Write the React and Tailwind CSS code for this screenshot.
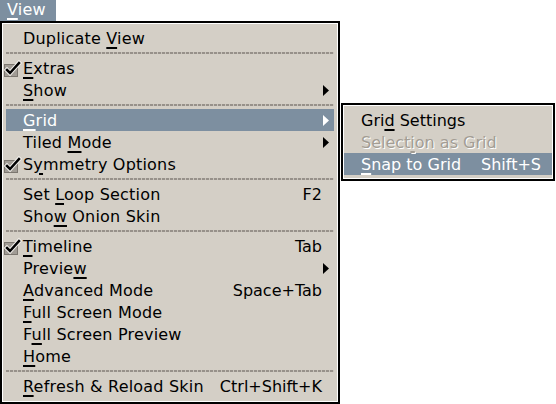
import React from 'react';

const Mnemonic = ({ text, u }) => {
  if (u === undefined || u < 0) return <span>{text}</span>;
  return (
    <span>
      {text.slice(0, u)}
      <span className="underline decoration-2 underline-offset-[3px]">{text[u]}</span>
      {text.slice(u + 1)}
    </span>
  );
};

const Check = () => (
  <svg width="18" height="18" viewBox="0 0 18 18" className="-ml-[2px] block">
    <rect x="0" y="4" width="14" height="13" fill="#7c7770" />
    <rect x="1" y="5" width="12" height="11" fill="#a19c95" />
    <path d="M3 10 L6 13 L15 3" fill="none" stroke="#f4f2ee" strokeWidth="4.5" strokeLinecap="square" />
    <path d="M3 10 L6 13 L15 3" fill="none" stroke="#000000" strokeWidth="2.5" strokeLinecap="square" />
  </svg>
);

const Arrow = ({ active }) => (
  <svg width="7" height="11" viewBox="0 0 7 11" className="block">
    <path d="M0 0 L6 5.5 L0 11 Z" fill={active ? '#ffffff' : '#000000'} />
  </svg>
);

const Separator = () => (
  <div className="h-[8px] flex flex-col justify-center">
    <div className="h-[2px] bg-[repeating-linear-gradient(90deg,#97918a_0_3px,#c9c4bb_3px_4px)]" />
  </div>
);

const MenuItem = ({ label, u, checked, shortcut, arrow, active, disabled, sub }) => (
  <div
    className={
      active
        ? 'flex items-center h-[22px] pt-[1px] bg-[#7d8fa0] text-white'
        : disabled
        ? 'flex items-center h-[22px] pt-[1px] text-[#a39d94] [text-shadow:1px_1px_0_#ffffff]'
        : 'flex items-center h-[22px] pt-[1px] text-black'
    }
  >
    <div className="w-[17px] shrink-0 flex items-center">{checked && <Check />}</div>
    <div className="flex-1 whitespace-nowrap">
      <Mnemonic text={label} u={u} />
    </div>
    {shortcut && <div className="whitespace-nowrap pl-4 tracking-normal">{shortcut}</div>}
    {sub ? (
      <div className="w-[11px] shrink-0" />
    ) : (
      <div className="w-[12px] shrink-0 flex items-center pl-[1px]">{arrow && <Arrow active={active} />}</div>
    )}
  </div>
);

export default function App() {
  return (
    <div
      className="w-[556px] h-[404px] bg-white overflow-hidden text-[16px] leading-[22px] tracking-[0.2px]"
      style={{ fontFamily: '"DejaVu Sans", "Liberation Sans", sans-serif' }}
    >
      <div className="w-[56px] h-[21px] bg-[#7d8fa0] text-white pl-[7px] leading-[20px]">
        <Mnemonic text="View" u={0} />
      </div>
      <div className="flex items-start">
        <div className="w-[340px] h-[383px] border-2 border-black">
          <div className="h-full border border-white bg-[#d4cfc6] p-[3px]">
            <MenuItem label="Duplicate View" u={10} />
            <Separator />
            <MenuItem label="Extras" u={0} checked />
            <MenuItem label="Show" u={0} arrow />
            <Separator />
            <MenuItem label="Grid" u={0} arrow active />
            <MenuItem label="Tiled Mode" u={6} arrow />
            <MenuItem label="Symmetry Options" u={1} checked />
            <Separator />
            <MenuItem label="Set Loop Section" u={4} shortcut="F2" />
            <MenuItem label="Show Onion Skin" u={3} />
            <Separator />
            <MenuItem label="Timeline" u={0} checked shortcut="Tab" />
            <MenuItem label="Preview" u={6} arrow />
            <MenuItem label="Advanced Mode" u={0} shortcut="Space+Tab" />
            <MenuItem label="Full Screen Mode" u={0} />
            <MenuItem label="Full Screen Preview" u={1} />
            <MenuItem label="Home" u={0} />
            <Separator />
            <MenuItem label="Refresh & Reload Skin" u={0} shortcut="Ctrl+Shift+K" />
          </div>
        </div>
        <div className="ml-[1px] mt-[82px] w-[214px] border-2 border-black tracking-normal">
          <div className="border border-white bg-[#d4cfc6] py-[3px]">
            <MenuItem label="Grid Settings" u={3} sub />
            <MenuItem label="Selection as Grid" u={6} disabled sub />
            <MenuItem label="Snap to Grid" u={0} shortcut="Shift+S" active sub />
          </div>
        </div>
      </div>
    </div>
  );
}
